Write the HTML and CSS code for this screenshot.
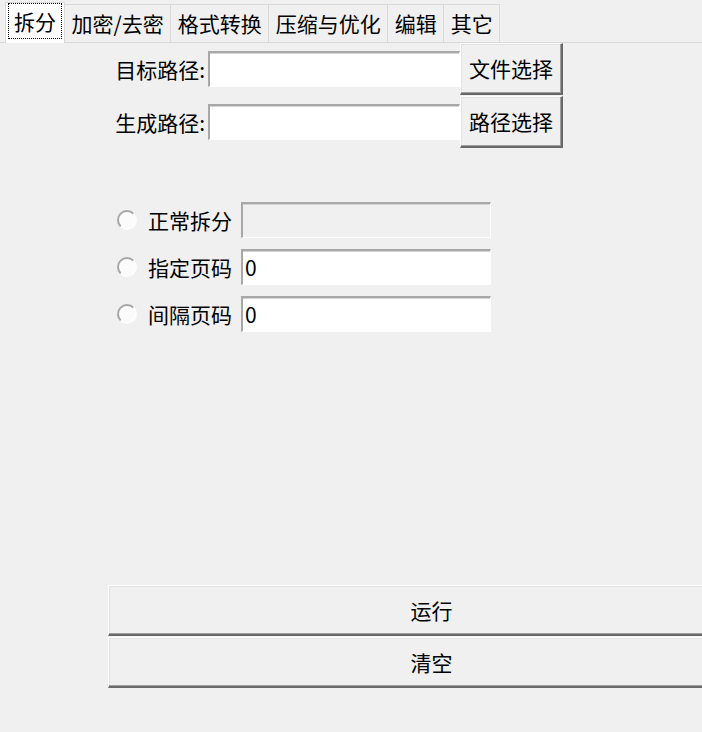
FILE: index.html
```html
<!DOCTYPE html>
<html lang="zh">
<head>
<meta charset="utf-8">
<title>PDF工具</title>
<link rel="stylesheet" href="styles.css">
</head>
<body>
<div class="app">
  <div class="tabs">
    <div class="tab tab-active"><span class="focus">拆分</span></div>
    <div class="tab">加密/去密</div>
    <div class="tab">格式转换</div>
    <div class="tab">压缩与优化</div>
    <div class="tab">编辑</div>
    <div class="tab">其它</div>
  </div>

  <div class="paths">
    <label class="path-label">目标路径:</label>
    <div class="entry"></div>
    <button class="btn">文件选择</button>
    <label class="path-label">生成路径:</label>
    <div class="entry"></div>
    <button class="btn">路径选择</button>
  </div>

  <div class="options">
    <div class="opt-row">
      <span class="radio"></span>
      <span class="opt-label">正常拆分</span>
      <div class="entry entry-wide entry-disabled"></div>
    </div>
    <div class="opt-row">
      <span class="radio"></span>
      <span class="opt-label">指定页码</span>
      <div class="entry entry-wide">0</div>
    </div>
    <div class="opt-row">
      <span class="radio"></span>
      <span class="opt-label">间隔页码</span>
      <div class="entry entry-wide">0</div>
    </div>
  </div>

  <div class="actions">
    <button class="btn btn-wide">运行</button>
    <button class="btn btn-wide">清空</button>
  </div>
</div>
</body>
</html>
```

FILE: styles.css
```css
html, body {
  margin: 0;
  padding: 0;
  background: #f0f0f0;
  overflow: hidden;
}
body {
  width: 702px;
  height: 732px;
  font-family: "Noto Sans CJK SC", "Noto Sans", sans-serif;
  font-size: 21px;
  color: #000;
}
.app {
  display: flex;
  flex-direction: column;
}

/* Tabs */
.tabs {
  display: flex;
  align-items: flex-end;
  height: 43px;
  padding-left: 5px;
  box-sizing: border-box;
  border-bottom: 1px solid #d9d9d9;
}
.tab {
  height: 38px;
  box-sizing: border-box;
  padding: 0 6.5px;
  border: 1px solid #d9d9d9;
  border-bottom: none;
  margin-left: -1px;
  display: flex;
  align-items: center;
  line-height: 1;
  white-space: nowrap;
  background: #f0f0f0;
}
.tab-active {
  height: 41px;
  background: #fff;
  margin-left: 0;
  margin-bottom: -1px;
  padding: 0 3px;
  position: relative;
  z-index: 1;
}
.focus {
  outline: 1px dotted #000;
  padding: 7px 5px 6px;
  margin-top: -4px;
}

/* Path rows */
.paths {
  display: grid;
  grid-template-columns: 100px 252px 103px;
  grid-auto-rows: 52px;
  row-gap: 1px;
  align-items: center;
  margin-left: 108px;
}
.path-label {
  justify-self: end;
  padding-right: 3px;
  line-height: 1;
}
.entry {
  height: 36px;
  box-sizing: border-box;
  background: #fff;
  border-top: 2px solid #a8a8a8;
  border-left: 2px solid #a8a8a8;
  border-right: 1px solid #fff;
  border-bottom: 1px solid #fff;
  box-shadow: inset 0 1px 0 #d4d4d4;
  display: flex;
  align-items: center;
  padding-left: 2px;
  line-height: 1;
}
.entry-wide {
  width: 250px;
}
.entry-disabled {
  background: #f0f0f0;
}

.btn {
  font: inherit;
  color: #000;
  background: #f0f0f0;
  border-style: solid;
  border-width: 1px 2px 2px 1px;
  border-color: #fff #696969 #696969 #fff;
  box-shadow: inset -1px -1px 0 #a0a0a0, inset 1px 1px 0 #e3e3e3;
  padding: 0;
  margin: 0;
  line-height: 1;
  height: 52px;
  width: 103px;
  box-sizing: border-box;
}

/* Options */
.options {
  display: flex;
  flex-direction: column;
  row-gap: 11px;
  margin-top: 54px;
  margin-left: 117px;
}
.opt-row {
  display: flex;
  align-items: center;
  height: 36px;
}
.radio {
  width: 20px;
  height: 20px;
  box-sizing: border-box;
  border-radius: 50%;
  border: 2px solid;
  border-color: #a6a6a6 #fdfdfd #fdfdfd #a6a6a6;
  background: #fbfbfb;
  flex: none;
}
.opt-label {
  margin-left: 11px;
  width: 84px;
  line-height: 1;
  white-space: nowrap;
}
.opt-row .entry {
  margin-left: 9px;
}

/* Actions */
.actions {
  display: flex;
  flex-direction: column;
  row-gap: 1px;
  margin-top: 253px;
  margin-left: 108px;
  width: 594px;
  overflow: hidden;
}
.btn-wide {
  flex: none;
  width: 648px;
  height: 51px;
}
```
